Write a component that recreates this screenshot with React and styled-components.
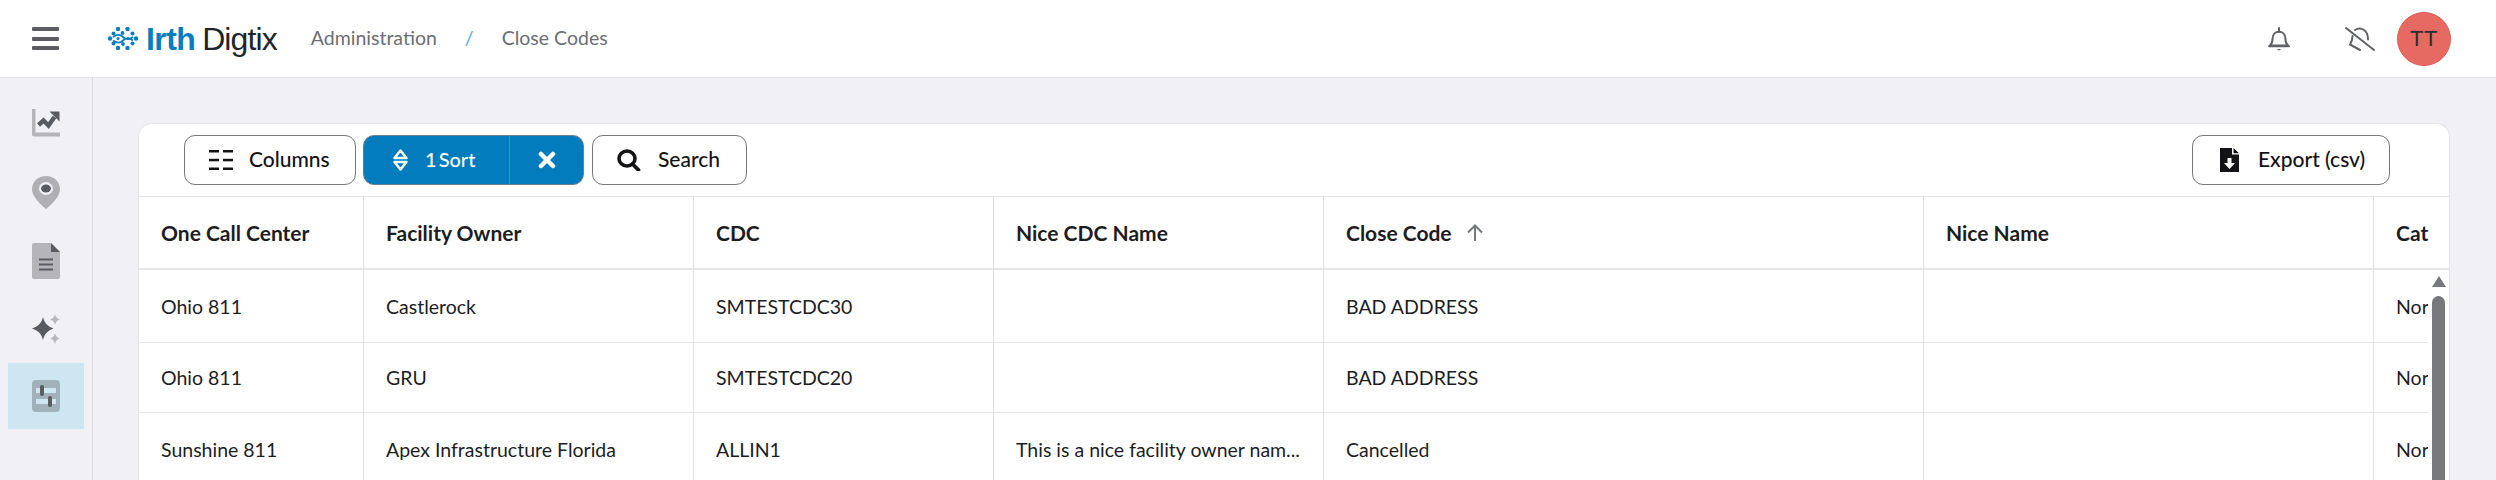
import React from "react";
import styled, { createGlobalStyle } from "styled-components";

const Global = createGlobalStyle`
  html, body { margin: 0; padding: 0; background: #f0f0f5; }
  body { font-family: "Lato", "Liberation Sans", sans-serif; color: #1d1d1f; }
  * { box-sizing: border-box; }
`;

const Page = styled.div`
  width: 2496px;
  height: 480px;
  overflow: hidden;
  display: flex;
  flex-direction: column;
  background: #f0f0f5;
`;

const TopBar = styled.header`
  flex: none;
  height: 78px;
  display: flex;
  align-items: center;
  padding: 0 45px 0 32px;
  background: #fff;
  border-bottom: 1px solid #e2e2e6;
`;

const MenuButton = styled.div`
  width: 27px;
  height: 23px;
  display: flex;
  flex-direction: column;
  justify-content: space-between;
  margin-right: 49px;
  span { display: block; height: 4px; background: #5a5c60; border-radius: 1px; }
`;

const Logo = styled.div`
  display: flex;
  align-items: center;
  margin-right: 34px;
  font-family: "Liberation Sans", sans-serif;
  font-size: 32px;
  line-height: 40px;
`;
const LogoIrth = styled.span`
  margin: 0 7px 0 8px;
  color: #0a7dbf;
  font-weight: 700;
  letter-spacing: -0.6px;
`;
const LogoDigtix = styled.span`
  color: #232427;
  font-weight: 400;
  letter-spacing: -0.9px;
`;

const Crumbs = styled.nav`
  display: flex;
  align-items: center;
  gap: 28px;
  padding-bottom: 2px;
  font-size: 19.5px;
  color: #6b6e73;
`;
const Slash = styled.span`
  color: #5aa5d8;
`;

const TopRight = styled.div`
  margin-left: auto;
  display: flex;
  align-items: center;
`;
const Avatar = styled.div`
  width: 54px;
  height: 54px;
  margin-left: 22px;
  border-radius: 50%;
  display: flex;
  align-items: center;
  justify-content: center;
  background: #e76a62;
  border: 1px solid #dc5e56;
  color: #2d2d30;
  font-family: "Liberation Sans", sans-serif;
  font-size: 22px;
  letter-spacing: 0.5px;
`;
const BellSlot = styled.div`
  display: flex;
  margin-right: ${(p) => p.$gap || 0}px;
`;

const Body = styled.div`
  flex: 1;
  min-height: 0;
  display: flex;
`;

const Sidebar = styled.aside`
  flex: none;
  width: 93px;
  padding: 11px 8px 0;
  border-right: 1px solid #d8d8dc;
  display: flex;
  flex-direction: column;
`;
const SideItem = styled.div`
  flex: none;
  height: ${(p) => p.$h}px;
  display: flex;
  align-items: center;
  justify-content: center;
  margin-top: ${(p) => p.$mt || 0}px;
  background: ${(p) => (p.$active ? "#cde6f1" : "transparent")};
`;

const Content = styled.main`
  flex: 1;
  min-width: 0;
  padding: 45px 46px 0 45px;
`;

const Card = styled.section`
  height: 100%;
  min-height: 400px;
  background: #fff;
  border: 1px solid #e3e3e8;
  border-bottom: 0;
  border-radius: 14px 14px 0 0;
  display: flex;
  flex-direction: column;
  position: relative;
  overflow: hidden;
`;

const Toolbar = styled.div`
  flex: none;
  height: 73px;
  display: flex;
  align-items: center;
  padding: 0 59px 1px 45px;
  border-bottom: 1px solid #e2e2e6;
`;

const Button = styled.button`
  height: 50px;
  width: ${(p) => p.$w}px;
  padding: 0 0 2px ${(p) => p.$pl}px;
  margin-right: ${(p) => p.$mr || 0}px;
  display: flex;
  align-items: center;
  gap: ${(p) => p.$gap}px;
  background: #fff;
  border: 1px solid #77787c;
  border-radius: 11px;
  color: #131315;
  font-family: inherit;
  font-size: 21px;
  font-weight: 500;
  svg { margin-top: 2px; }
`;
const ExportButton = styled(Button)`
  margin-left: auto;
`;
const SortGroup = styled.div`
  height: 50px;
  width: 221px;
  margin-right: 8px;
  display: flex;
  background: #027cbd;
  border: 1px solid #6f7f8c;
  border-radius: 11px;
  color: #fff;
  font-size: 20px;
  font-weight: 500;
`;
const SortMain = styled.div`
  width: 146px;
  padding: 0 0 2px 28px;
  display: flex;
  align-items: center;
  gap: 16px;
  border-right: 1px solid #6f7f8c;
  word-spacing: -3px;
  svg { margin-top: 2px; }
`;
const SortClear = styled.div`
  flex: 1;
  display: flex;
  align-items: center;
  justify-content: center;
`;

const Row = styled.div`
  flex: none;
  height: ${(p) => p.$h}px;
  width: ${(p) => (p.$head ? "100%" : "2289px")};
  display: grid;
  grid-template-columns: 225px 330px 300px 330px 600px 450px 1fr;
  overflow: hidden;
  border-bottom: ${(p) => (p.$head ? "2px" : "1px")} solid #e6e6ea;
  font-size: ${(p) => (p.$head ? 21 : 19.5)}px;
  font-weight: ${(p) => (p.$head ? 700 : 400)};
`;
const Cell = styled.div`
  display: flex;
  align-items: center;
  gap: 15px;
  padding-left: 22px;
  white-space: nowrap;
  overflow: hidden;
  border-right: 1px solid #e0e0e4;
  &:last-child { border-right: 0; }
`;

const ScrollTrack = styled.div`
  position: absolute;
  right: 3px;
  top: 152px;
  width: 15px;
  display: flex;
  flex-direction: column;
  align-items: center;
  gap: 9px;
`;
const ScrollArrow = styled.div`
  width: 0;
  height: 0;
  border-left: 7.5px solid transparent;
  border-right: 7.5px solid transparent;
  border-bottom: 11px solid #77787c;
`;
const ScrollThumb = styled.div`
  width: 13px;
  height: 200px;
  border-radius: 7px 7px 0 0;
  background: #77787c;
`;

const Bell = () => (
  <svg width="22" height="24" viewBox="0 0 22 24" fill="none" stroke="#5f6165" strokeWidth="2">
    <path d="M2 18.5c2-2 2.6-3.5 2.6-7 0-3.8 2.6-6.7 6.4-6.7s6.4 2.9 6.4 6.7c0 3.5.6 5 2.6 7z" strokeLinejoin="round" />
    <path d="M11 1v3.5" strokeLinecap="round" />
    <path d="M1 19.2h20" strokeLinecap="round" />
    <path d="M8.5 22h5l-2.5 1.6z" fill="#5f6165" stroke="none" />
  </svg>
);
const BellOff = () => (
  <svg width="30" height="24" viewBox="0 0 30 24" fill="none" stroke="#5f6165" strokeWidth="2">
    <path d="M1 1l28 22" strokeLinecap="round" />
    <path d="M10 3c3-2 6-2 9 0 3 2 4 5 4 9.500" strokeLinecap="round" />
    <path d="M7.500 9c0 4-1 6-2.500 8.500L15 23" strokeLinejoin="round" strokeLinecap="round" />
  </svg>
);

const LogoMark = () => (
  <svg width="30" height="23" viewBox="0 0 30 23" fill="#0a7dbf">
    {[
      [10, 2, 2.2], [19.5, 2, 2.2], [5.5, 6.5, 2], [14.5, 6, 1.9], [24.5, 6.5, 2],
      [2, 11.5, 2.2], [28, 11.5, 2.2], [5.5, 16.5, 2], [15, 17, 1.9], [24.5, 16.5, 2],
      [10, 21, 2.2], [19.5, 21, 2.2], [10, 11.5, 1.6], [20, 11.5, 1.6],
    ].map(([x, y, r]) => (
      <circle key={`${x}-${y}`} cx={x} cy={y} r={r} />
    ))}
    <path d="M5 10c4-3 7-3 10 0s6 3 10 0M5 13.500c4 3 7 3 10 0s6-3 10 0" fill="none" stroke="#0a7dbf" strokeWidth="1.800" />
  </svg>
);

const ChartIcon = () => (
  <svg width="28" height="28" viewBox="0 0 28 28">
    <path d="M0 0h3.500v23.500H28v4H2a2 2 0 0 1-2-2z" fill="#b5b5b9" />
    <path d="M6.500 16l5-4.500 5 5 6-8.500" fill="none" stroke="#5a5b60" strokeWidth="4.400" />
    <path d="M17.500 2.500H27.500V12.500z" fill="#5a5b60" />
  </svg>
);
const PinIcon = () => (
  <svg width="28" height="33" viewBox="0 0 28 33">
    <path d="M14 0c7.800 0 14 5.800 14 13.200 0 6.500-6.500 13.600-14 19.800C6.500 26.800 0 19.700 0 13.200 0 5.800 6.200 0 14 0z" fill="#b0b0b4" />
    <ellipse cx="14" cy="12.500" rx="7" ry="6.500" fill="#f0f0f5" />
    <ellipse cx="14" cy="12.500" rx="5" ry="4" fill="#5a5b60" />
  </svg>
);
const DocIcon = () => (
  <svg width="28" height="36" viewBox="0 0 28 36">
    <path d="M2 0h17l9 9v25a2 2 0 0 1-2 2H2a2 2 0 0 1-2-2V2a2 2 0 0 1 2-2z" fill="#b5b5b9" />
    <path d="M19 0l9 9h-9z" fill="#5a5b60" />
    <path d="M7 16.500h14M7 21.500h14M7 26.500h14" stroke="#5a5b60" strokeWidth="2.200" />
  </svg>
);
const SparkIcon = () => (
  <svg width="28" height="30" viewBox="0 0 28 30">
    <path d="M11 3c1.500 6 4 9 10.500 11.500C15 17 12.500 20 11 26 9.500 20 7 17 0 14.500 7 12 9.500 9 11 3z" fill="#5a5b60" />
    <path d="M23 0c.5 3 2 4.500 5 5.500-3 1-4.500 2.500-5 5.500-.5-3-2-4.500-5-5.500 3-1 4.500-2.500 5-5.500z" fill="#b8b8bc" />
    <path d="M23 19c.5 3 2 4.500 5 5.500-3 1-4.500 2.500-5 5.500-.5-3-2-4.500-5-5.500 3-1 4.500-2.500 5-5.500z" fill="#b8b8bc" />
  </svg>
);
const SliderIcon = () => (
  <svg width="28" height="32" viewBox="0 0 28 32">
    <rect width="28" height="32" rx="4" fill="#a1b1bb" />
    <rect x="4" y="8" width="20" height="5" fill="#cde6f1" />
    <rect x="4" y="19" width="20" height="5" fill="#cde6f1" />
    <rect x="8" y="5" width="4" height="11" rx="2" fill="#5a5b60" />
    <rect x="16" y="16" width="4" height="11" rx="2" fill="#5a5b60" />
  </svg>
);
const ColumnsIcon = () => (
  <svg width="24" height="20" viewBox="0 0 24 20" fill="#131315">
    {[0, 8.800, 17.500].map((y) => (
      <React.Fragment key={y}>
        <rect y={y} width="10" height="2.500" />
        <rect x="14" y={y} width="10" height="2.500" />
      </React.Fragment>
    ))}
  </svg>
);
const SortIcon = () => (
  <svg width="17" height="22" viewBox="0 0 17 22" fill="none" stroke="#fff" strokeWidth="2.500">
    <path d="M8.500 1.500L14.500 9H2.500z" strokeLinejoin="round" />
    <path d="M8.500 20.500L14.500 13H2.500z" strokeLinejoin="round" />
  </svg>
);
const ClearIcon = () => (
  <svg width="18" height="18" viewBox="0 0 18 18">
    <path d="M3 3l12 12M15 3L3 15" stroke="#fff" strokeWidth="4.500" strokeLinecap="round" />
  </svg>
);
const SearchIcon = () => (
  <svg width="24" height="22" viewBox="0 0 24 22" fill="none" stroke="#131315">
    <ellipse cx="10" cy="9.500" rx="8" ry="7.500" strokeWidth="3.600" />
    <path d="M15.500 15l6 6" strokeWidth="3.800" strokeLinecap="round" />
  </svg>
);
const ExportIcon = () => (
  <svg width="19" height="24" viewBox="0 0 19 24">
    <path d="M0 0h12v6.500h7V24H0z" fill="#131315" />
    <path d="M13.500 0L19 5.200h-5.500z" fill="#131315" />
    <path d="M7.500 10h4v5h3.500l-5.500 6-5.500-6h3.500z" fill="#fff" />
  </svg>
);
const UpArrow = () => (
  <svg width="16" height="17" viewBox="0 0 16 17" fill="none" stroke="#77787c" strokeWidth="2">
    <path d="M8 17V1.500M1 8.500l7-7 7 7" />
  </svg>
);

const columns = ["One Call Center", "Facility Owner", "CDC", "Nice CDC Name", "Close Code", "Nice Name", "Cat"];
const rows = [
  { h: 73, cells: ["Ohio 811", "Castlerock", "SMTESTCDC30", "", "BAD ADDRESS", "", "Normal"] },
  { h: 70, cells: ["Ohio 811", "GRU", "SMTESTCDC20", "", "BAD ADDRESS", "", "Normal"] },
  { h: 73, cells: ["Sunshine 811", "Apex Infrastructure Florida", "ALLIN1", "This is a nice facility owner nam...", "Cancelled", "", "Normal"] },
];

export default function App() {
  return (
    <Page>
      <Global />
      <TopBar>
        <MenuButton><span /><span /><span /></MenuButton>
        <Logo>
          <LogoMark />
          <LogoIrth>Irth</LogoIrth>
          <LogoDigtix>Digtix</LogoDigtix>
        </Logo>
        <Crumbs>
          <span>Administration</span>
          <Slash>/</Slash>
          <span>Close Codes</span>
        </Crumbs>
        <TopRight>
          <BellSlot $gap={55}><Bell /></BellSlot>
          <BellSlot><BellOff /></BellSlot>
          <Avatar>TT</Avatar>
        </TopRight>
      </TopBar>
      <Body>
        <Sidebar>
          <SideItem $h={68}><ChartIcon /></SideItem>
          <SideItem $h={70}><PinIcon /></SideItem>
          <SideItem $h={68}><DocIcon /></SideItem>
          <SideItem $h={67}><SparkIcon /></SideItem>
          <SideItem $h={66} $mt={1} $active><SliderIcon /></SideItem>
        </Sidebar>
        <Content>
          <Card>
            <Toolbar>
              <Button $w={172} $pl={24} $gap={16} $mr={7}><ColumnsIcon />Columns</Button>
              <SortGroup>
                <SortMain><SortIcon />1 Sort</SortMain>
                <SortClear><ClearIcon /></SortClear>
              </SortGroup>
              <Button $w={155} $pl={24} $gap={17}><SearchIcon />Search</Button>
              <ExportButton $w={198} $pl={27} $gap={19}><ExportIcon />Export (csv)</ExportButton>
            </Toolbar>
            <Row $head $h={73}>
              {columns.map((c) => (
                <Cell key={c}>
                  {c}
                  {c === "Close Code" && <UpArrow />}
                </Cell>
              ))}
            </Row>
            {rows.map((r, i) => (
              <Row key={i} $h={r.h}>
                {r.cells.map((c, j) => <Cell key={j}>{c}</Cell>)}
              </Row>
            ))}
            <ScrollTrack>
              <ScrollArrow />
              <ScrollThumb />
            </ScrollTrack>
          </Card>
        </Content>
      </Body>
    </Page>
  );
}
